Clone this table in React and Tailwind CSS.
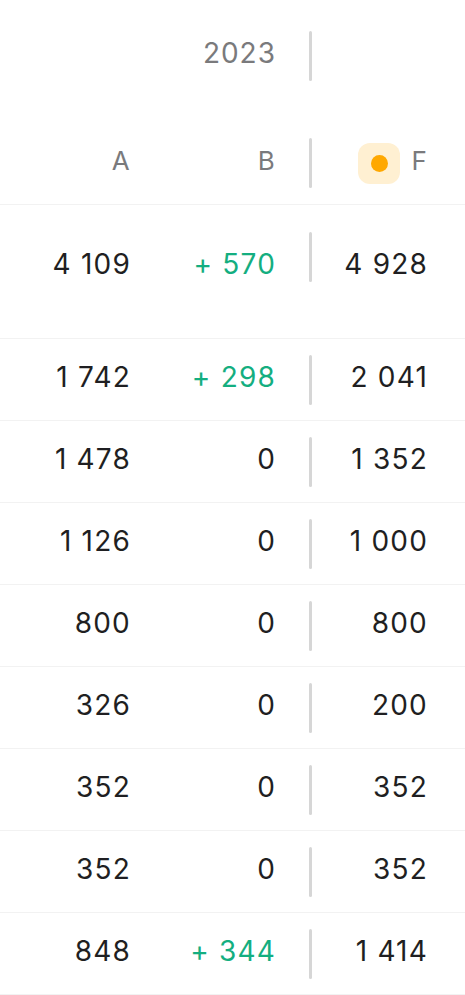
const rows = [
  { a: "1 742", b: "+ 298", f: "2 041" },
  { a: "1 478", b: "0", f: "1 352" },
  { a: "1 126", b: "0", f: "1 000" },
  { a: "800", b: "0", f: "800" },
  { a: "326", b: "0", f: "200" },
  { a: "352", b: "0", f: "352" },
  { a: "352", b: "0", f: "352" },
  { a: "848", b: "+ 344", f: "1 414" },
];

function Divider() {
  return <div className="ml-[33px] h-[50px] w-[3px] shrink-0 rounded-full bg-[#d6d6d6]" />;
}

function Cells({ a, b, f }) {
  const up = b.startsWith("+");
  return (
    <>
      <div className="mb-[5px] w-[131px] shrink-0 text-right text-[#1f1f22]">{a}</div>
      <div className={`mb-[5px] w-[145px] shrink-0 text-right ${up ? "text-[#14ae80]" : "text-[#1f1f22]"}`}>{b}</div>
      <Divider />
      <div className="mb-[5px] w-[116px] shrink-0 text-right text-[#1f1f22]">{f}</div>
    </>
  );
}

export default function App() {
  return (
    <div
      className="w-[465px] h-[995px] overflow-hidden bg-white text-[28px] leading-[34px] tracking-[1.2px]"
      style={{ fontFamily: "Inter, 'Noto Sans', sans-serif" }}
    >
      <div className="border-b border-[#f2f2f2] pb-[16px]">
        <div className="flex items-center pt-[31px]">
          <div className="mb-[6px] w-[276px] shrink-0 text-right text-[28px] tracking-[1px] text-[#7a7a7c]">2023</div>
          <Divider />
        </div>
        <div className="mt-[57px] flex items-center text-[26px] text-[#7a7a7c]">
          <div className="mb-[4px] w-[131px] shrink-0 text-right">A</div>
          <div className="mb-[4px] w-[145px] shrink-0 text-right">B</div>
          <Divider />
          <div className="flex w-[116px] shrink-0 items-center justify-end gap-[11px]">
            <span className="flex h-[41px] w-[42px] items-center justify-center rounded-[12px] bg-[#fff0d2]">
              <span className="h-[17px] w-[17px] rounded-full bg-[#ffa800]" />
            </span>
            <span className="mb-[4px]">F</span>
          </div>
        </div>
      </div>

      <div className="flex h-[134px] items-start border-b border-[#f2f2f2] pt-[27px]">
        <div className="mt-[15px] flex">
          <div className="w-[131px] shrink-0 text-right text-[#1f1f22]">4 109</div>
          <div className="w-[145px] shrink-0 text-right text-[#14ae80]">+ 570</div>
        </div>
        <Divider />
        <div className="mt-[15px] w-[116px] shrink-0 text-right text-[#1f1f22]">4 928</div>
      </div>

      {rows.map((r, i) => (
        <div key={i} className="flex h-[82px] items-center border-b border-[#f2f2f2]">
          <Cells {...r} />
        </div>
      ))}
    </div>
  );
}
